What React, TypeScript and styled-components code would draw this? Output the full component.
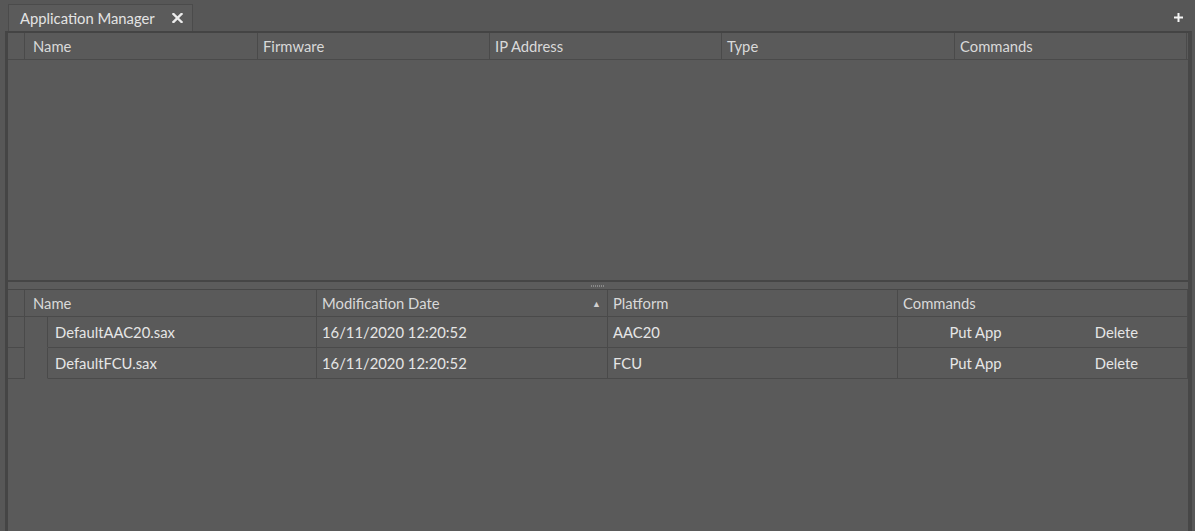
import React from 'react';
import styled, { createGlobalStyle } from 'styled-components';

const GlobalStyle = createGlobalStyle`
	html, body {
		margin: 0;
		padding: 0;
		background: #575757;
		font-family: Lato, "Open Sans", sans-serif;
		font-size: 14.8px;
		color: #e2e2e2;
		overflow: hidden;
	}
`;

const Page = styled.div`
	width: 1195px;
	height: 531px;
	display: flex;
	flex-direction: column;
`;

const TabBar = styled.div`
	height: 31px;
	display: flex;
	align-items: flex-end;
	padding-left: 8px;
	padding-right: 12px;
	box-sizing: border-box;
`;

const Tab = styled.div`
	width: 185px;
	height: 27px;
	box-sizing: border-box;
	border: 1px solid #4b4b4b;
	border-bottom: none;
	background: #5b5b5b;
	display: flex;
	align-items: center;
	padding-left: 11px;
	gap: 17px;
	color: #e4e4e4;
`;

const CloseIcon = () => (
	<svg width="11" height="10" viewBox="0 0 11 10">
		<path d="M1.5 1 L9.5 9 M9.5 1 L1.5 9" stroke="#ececec" strokeWidth="2.4" strokeLinecap="square" />
	</svg>
);

const PlusIcon = () => (
	<svg width="9" height="9" viewBox="0 0 9 9">
		<path d="M4.5 0 V9 M0 4.5 H9" stroke="#f6f6f6" strokeWidth="2" />
	</svg>
);

const PlusButton = styled.span`
	margin-left: auto;
	align-self: center;
	margin-top: 3px;
	display: flex;
`;

const Frame = styled.div`
	flex: 1;
	margin-left: 5px;
	margin-right: 3px;
	border-top: 2px solid #444444;
	border-left: 3px solid #454545;
	border-right: 4px solid #474747;
	background: #5a5a5a;
	display: flex;
	flex-direction: column;
	min-height: 0;
`;

const GridPane = styled.div<{ $height?: number }>`
	${p => (p.$height ? `height: ${p.$height}px;` : 'flex: 1;')}
	display: flex;
	flex-direction: column;
	box-sizing: border-box;
	border-bottom: ${p => (p.$height ? '2px solid #464646' : 'none')};
`;

const Row = styled.div<{ $h: number }>`
	display: flex;
	height: ${p => p.$h}px;
	box-sizing: border-box;
	border-bottom: 1px solid #4a4a4a;
`;

const RowHead = styled.div`
	width: 17px;
	flex: none;
	box-sizing: border-box;
	border-right: 1px solid #4a4a4a;
`;

const Cell = styled.div<{ $w: number; $pad?: number; $header?: boolean }>`
	width: ${p => p.$w}px;
	flex: none;
	box-sizing: border-box;
	border-right: 1px solid #4a4a4a;
	padding-left: ${p => p.$pad ?? 5}px;
	display: flex;
	align-items: center;
	color: ${p => (p.$header ? '#d9d9d9' : '#e6e6e6')};
	white-space: nowrap;
	position: relative;
`;

const Indent = styled.div`
	width: 23px;
	flex: none;
	box-sizing: border-box;
	border-right: 1px solid #4a4a4a;
	border-bottom: 1px solid #5a5a5a;
	margin-bottom: -1px;
`;

const SortArrow = styled.span`
	position: absolute;
	right: 6px;
	top: 50%;
	transform: translateY(-50%);
	font-size: 9px;
	color: #d0d0d0;
`;

const CommandHalf = styled.div<{ $offset?: number }>`
	flex: 1;
	text-align: center;
	padding-left: ${p => p.$offset ?? 0}px;
`;

const Splitter = styled.div`
	height: 8px;
	box-sizing: border-box;
	display: flex;
	justify-content: center;
	align-items: center;
	border-bottom: 1px solid #474747;
	background: #5c5c5c;
`;

const Grip = styled.div`
	width: 14px;
	height: 2px;
	background-image: repeating-linear-gradient(90deg, #8a8a8a 0 1px, transparent 1px 2px);
`;

const topCols = [
	{ name: 'Name', w: 233, pad: 8 },
	{ name: 'Firmware', w: 232, pad: 5 },
	{ name: 'IP Address', w: 232, pad: 5 },
	{ name: 'Type', w: 233, pad: 5 },
	{ name: 'Commands', w: 232, pad: 5 },
];

const files = [
	{ name: 'DefaultAAC20.sax', date: '16/11/2020 12:20:52', platform: 'AAC20' },
	{ name: 'DefaultFCU.sax', date: '16/11/2020 12:20:52', platform: 'FCU' },
];

function App() {
	return (
		<Page>
			<GlobalStyle />
			<TabBar>
				<Tab>
					<span>Application Manager</span>
					<CloseIcon />
				</Tab>
				<PlusButton><PlusIcon /></PlusButton>
			</TabBar>
			<Frame>
				<GridPane $height={249}>
					<Row $h={27}>
						<RowHead />
						{topCols.map(c => (
							<Cell key={c.name} $w={c.w} $pad={c.pad} $header>{c.name}</Cell>
						))}
					</Row>
				</GridPane>
				<Splitter><Grip /></Splitter>
				<GridPane>
					<Row $h={27}>
						<RowHead />
						<Cell $w={292} $pad={8} $header>Name</Cell>
						<Cell $w={291} $header>
							Modification Date
							<SortArrow>▲</SortArrow>
						</Cell>
						<Cell $w={290} $header>Platform</Cell>
						<Cell $w={290} $header>Commands</Cell>
					</Row>
					{files.map(f => (
						<Row $h={31} key={f.name}>
							<RowHead />
							<Indent />
							<Cell $w={269} $pad={7}>{f.name}</Cell>
							<Cell $w={291}>{f.date}</Cell>
							<Cell $w={290}>{f.platform}</Cell>
							<Cell $w={290} $pad={0}>
								<CommandHalf $offset={7}>Put App</CommandHalf>
								<CommandHalf>Delete</CommandHalf>
							</Cell>
						</Row>
					))}
				</GridPane>
			</Frame>
		</Page>
	);
}

export default App;
